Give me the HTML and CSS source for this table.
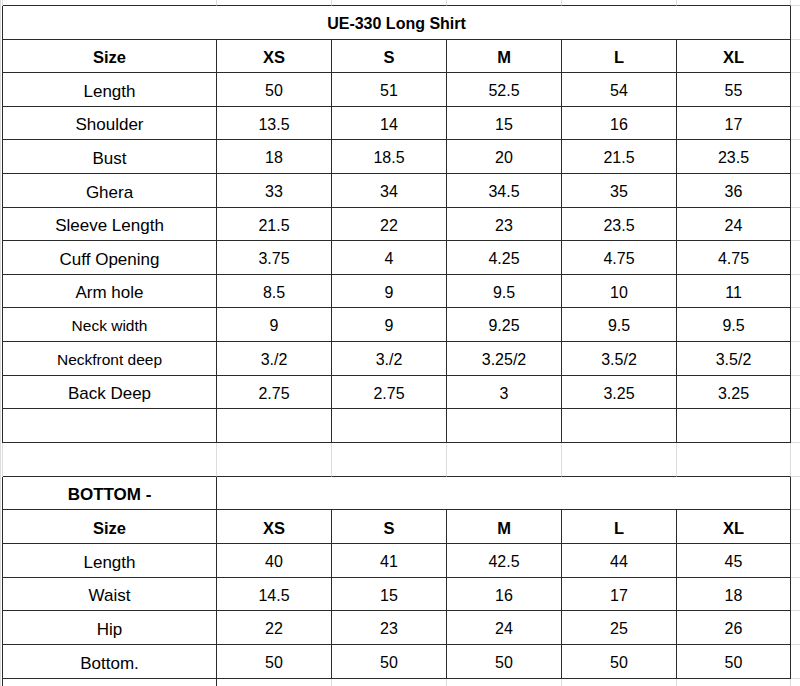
FILE: index.html
```html
<!DOCTYPE html>
<html lang="en">
<head>
<meta charset="utf-8">
<title>UE-330 Long Shirt</title>
<link rel="stylesheet" href="styles.css">
</head>
<body>
<table class="sheet">
  <colgroup>
    <col class="w-g"><col class="w-1"><col class="w-v"><col class="w-v"><col class="w-v"><col class="w-v"><col class="w-6"><col class="w-x">
  </colgroup>
  <tbody>
    <tr class="top"><td class="g"></td><td></td><td></td><td></td><td></td><td></td><td></td><td class="x"></td></tr>
    <tr class="t h34"><td class="g"></td><td colspan="6" class="title">UE-330 Long Shirt</td><td class="x"></td></tr>
    <tr class="t h33 head"><td class="g"></td><td>Size</td><td>XS</td><td>S</td><td>M</td><td>L</td><td>XL</td><td class="x"></td></tr>
    <tr class="t h34"><td class="g"></td><td class="lbl">Length</td><td>50</td><td>51</td><td>52.5</td><td>54</td><td>55</td><td class="x"></td></tr>
    <tr class="t h33"><td class="g"></td><td class="lbl">Shoulder</td><td>13.5</td><td>14</td><td>15</td><td>16</td><td>17</td><td class="x"></td></tr>
    <tr class="t h34"><td class="g"></td><td class="lbl">Bust</td><td>18</td><td>18.5</td><td>20</td><td>21.5</td><td>23.5</td><td class="x"></td></tr>
    <tr class="t h34"><td class="g"></td><td class="lbl">Ghera</td><td>33</td><td>34</td><td>34.5</td><td>35</td><td>36</td><td class="x"></td></tr>
    <tr class="t h33"><td class="g"></td><td class="lbl">Sleeve Length</td><td>21.5</td><td>22</td><td>23</td><td>23.5</td><td>24</td><td class="x"></td></tr>
    <tr class="t h34"><td class="g"></td><td class="lbl">Cuff Opening</td><td>3.75</td><td>4</td><td>4.25</td><td>4.75</td><td>4.75</td><td class="x"></td></tr>
    <tr class="t h33"><td class="g"></td><td class="lbl">Arm hole</td><td>8.5</td><td>9</td><td>9.5</td><td>10</td><td>11</td><td class="x"></td></tr>
    <tr class="t h34"><td class="g"></td><td class="lbl-s">Neck width</td><td>9</td><td>9</td><td>9.25</td><td>9.5</td><td>9.5</td><td class="x"></td></tr>
    <tr class="t h34"><td class="g"></td><td class="lbl-s">Neckfront deep</td><td>3./2</td><td>3./2</td><td>3.25/2</td><td>3.5/2</td><td>3.5/2</td><td class="x"></td></tr>
    <tr class="t h33"><td class="g"></td><td class="lbl">Back Deep</td><td>2.75</td><td>2.75</td><td>3</td><td>3.25</td><td>3.25</td><td class="x"></td></tr>
    <tr class="t h34"><td class="g"></td><td></td><td></td><td></td><td></td><td></td><td></td><td class="x"></td></tr>
    <tr class="gap h34"><td class="g"></td><td></td><td></td><td></td><td></td><td></td><td></td><td class="x"></td></tr>
    <tr class="t h33"><td class="g"></td><td class="section">BOTTOM -</td><td colspan="5"></td><td class="x"></td></tr>
    <tr class="t h34 head"><td class="g"></td><td>Size</td><td>XS</td><td>S</td><td>M</td><td>L</td><td>XL</td><td class="x"></td></tr>
    <tr class="t h34"><td class="g"></td><td class="lbl">Length</td><td>40</td><td>41</td><td>42.5</td><td>44</td><td>45</td><td class="x"></td></tr>
    <tr class="t h33"><td class="g"></td><td class="lbl">Waist</td><td>14.5</td><td>15</td><td>16</td><td>17</td><td>18</td><td class="x"></td></tr>
    <tr class="t h34"><td class="g"></td><td class="lbl">Hip</td><td>22</td><td>23</td><td>24</td><td>25</td><td>26</td><td class="x"></td></tr>
    <tr class="t h34"><td class="g"></td><td class="lbl">Bottom.</td><td>50</td><td>50</td><td>50</td><td>50</td><td>50</td><td class="x"></td></tr>
    <tr class="after h33"><td class="g"></td><td class="c1"></td><td></td><td></td><td></td><td></td><td></td><td class="x"></td></tr>
  </tbody>
</table>
</body>
</html>
```

FILE: styles.css
```css
html, body {
  margin: 0;
  padding: 0;
  background: #ffffff;
  overflow: hidden;
}

body {
  font-family: "Liberation Sans", Arial, sans-serif;
  color: #000000;
  font-size: 16px;
}

.sheet {
  border-collapse: separate;
  border-spacing: 0;
  table-layout: fixed;
  width: 800px;
}

.w-g { width: 3px; }
.w-1 { width: 214px; }
.w-v { width: 115px; }
.w-6 { width: 114px; }
.w-x { width: 9px; }

.sheet td {
  box-sizing: border-box;
  padding: 0;
  text-align: center;
  vertical-align: middle;
  white-space: nowrap;
  line-height: 1;
  border-right: 1px solid #dcdcdc;
  border-bottom: 1px solid #dcdcdc;
}

.sheet tr.t td {
  padding-top: 3px;
}

.sheet td.g {
  border-bottom: none;
  border-left: 1px solid #dcdcdc;
}

.sheet td.x {
  border-right: none;
}

.sheet tr.top { height: 6px; }
.sheet tr.h34 { height: 34px; }
.sheet tr.h33 { height: 33px; }

.sheet tr.top td { border-bottom-color: #2b2b2b; }
.sheet tr.top td.x { border-bottom-color: #dcdcdc; }

.sheet tr.t td {
  border-right-color: #2b2b2b;
  border-bottom-color: #2b2b2b;
}
.sheet tr.t td.x { border-bottom-color: #dcdcdc; }

.sheet tr.gap td { border-bottom-color: #2b2b2b; }
.sheet tr.gap td.x { border-bottom-color: #dcdcdc; }

.sheet tr.after td.g,
.sheet tr.after td.c1 { border-right-color: #2b2b2b; }

.sheet td.title {
  font-weight: bold;
  font-size: 16px;
}

.head td {
  font-weight: bold;
  font-size: 16.5px;
}

.sheet td.section {
  font-weight: bold;
  font-size: 17px;
}

.lbl { font-size: 17px; }
.lbl-s { font-size: 15.5px; }
```
